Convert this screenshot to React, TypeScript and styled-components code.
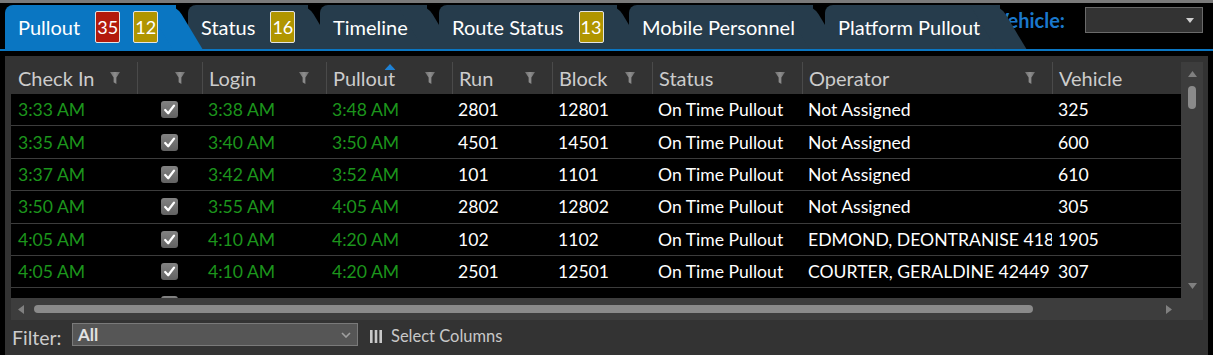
import React from "react";
import styled, { createGlobalStyle } from "styled-components";

const GlobalStyle = createGlobalStyle`
  html, body { margin: 0; padding: 0; background: #000; }
  body { font-family: Lato, "Open Sans", sans-serif; }
  * { box-sizing: border-box; }
`;

const Page = styled.div`
  width: 1213px;
  height: 355px;
  overflow: hidden;
  background: #000;
  border-top: 3px solid #7a7a7a;
  display: flex;
  flex-direction: column;
`;

const TabBar = styled.div`
  flex: none;
  display: flex;
  align-items: flex-end;
  gap: 12px;
  height: 48px;
  padding: 2px 0 0 5px;
  border-bottom: 2px solid #0a76c2;
`;

const Tab = styled.div<{ $active?: boolean; $w: number; $z: number }>`
  position: relative;
  z-index: ${(p) => (p.$active ? 20 : p.$z)};
  flex: none;
  width: ${(p) => p.$w}px;
  height: 44px;
  display: flex;
  align-items: center;
  padding-left: 13px;
  background: ${(p) => (p.$active ? "#0a76c2" : "#263c4c")};
  border-top-left-radius: 8px;
  color: #fff;
  font-size: 20px;
  white-space: nowrap;
  &::after {
    content: "";
    position: absolute;
    top: 0;
    bottom: 0;
    right: 0;
    width: 30px;
    background: inherit;
    border-top-right-radius: 9px;
    transform: skewX(31deg);
    transform-origin: top left;
    z-index: -1;
  }
`;

const Badge = styled.span<{ $tone: "red" | "gold"; $gap: number }>`
  display: inline-flex;
  align-items: center;
  justify-content: center;
  width: 25px;
  height: 32px;
  margin-left: ${(p) => p.$gap}px;
  border: 1px solid #e4e4e4;
  border-radius: 2px;
  background: ${(p) => (p.$tone === "red" ? "#b31a0c" : "#b09500")};
  color: #fff;
  font-size: 18px;
`;

const VehicleGroup = styled.div`
  flex: 1;
  align-self: flex-start;
  display: flex;
  align-items: center;
  justify-content: flex-end;
  gap: 20px;
  margin: 2px 0 0 -60px;
  padding-right: 10px;
  position: relative;
  z-index: 0;
`;

const VehicleLabel = styled.span`
  color: #1a78cc;
  font-weight: 700;
  font-size: 20px;
  white-space: nowrap;
`;

const VehicleSelect = styled.div`
  width: 118px;
  height: 26px;
  background: #333;
  border: 1px solid #6a6a6a;
  display: flex;
  align-items: center;
  justify-content: flex-end;
  padding-right: 8px;
`;

const Panel = styled.div`
  flex: 1;
  margin: 5px 5px 0 5px;
  background: #333;
  padding: 6px 5px 0 6px;
  display: flex;
  flex-direction: column;
`;

const Grid = styled.div`
  display: grid;
  grid-template-columns: 1170px 22px;
  grid-template-rows: 32px 204px 22px;
`;

const HeaderRow = styled.div`
  grid-column: 1;
  grid-row: 1;
  display: flex;
  background: #333;
`;

const HeadCell = styled.div<{ $w: number; $first?: boolean }>`
  position: relative;
  flex: none;
  width: ${(p) => p.$w}px;
  height: 100%;
  display: flex;
  align-items: center;
  justify-content: space-between;
  padding: 0 17px 0 ${(p) => (p.$first ? 7 : 6)}px;
  border-left: ${(p) => (p.$first ? "none" : "1px solid #4a4a4a")};
  color: #cccccc;
  font-size: 20px;
  white-space: nowrap;
`;

const SortMark = styled.svg`
  position: absolute;
  top: 2px;
  left: 50%;
  transform: translateX(-50%);
`;

const Body = styled.div`
  grid-column: 1;
  grid-row: 2;
  background: #000;
  overflow: hidden;
`;

const Row = styled.div`
  display: flex;
  height: 32.4px;
  border-bottom: 1px solid #3c3c3c;
`;

const Cell = styled.div<{ $w: number; $green?: boolean; $center?: boolean; $first?: boolean }>`
  flex: none;
  width: ${(p) => p.$w}px;
  display: flex;
  align-items: center;
  justify-content: ${(p) => (p.$center ? "center" : "flex-start")};
  padding-left: ${(p) => (p.$center ? 0 : p.$first ? 7 : 6)}px;
  overflow: hidden;
  white-space: nowrap;
  color: ${(p) => (p.$green ? "#1c951c" : "#fff")};
  font-size: 17.6px;
`;

const CheckBox = styled.span`
  width: 17px;
  height: 17px;
  border-radius: 3px;
  background: linear-gradient(#828282, #626262);
  display: flex;
  align-items: center;
  justify-content: center;
`;

const VScroll = styled.div`
  grid-column: 2;
  grid-row: 1 / 3;
  background: #3d3d3d;
  display: flex;
  flex-direction: column;
  align-items: center;
  padding: 9px 0 9px;
`;

const VThumb = styled.div`
  width: 8px;
  height: 23px;
  margin-top: 9px;
  border-radius: 4px;
  background: #8a8a8a;
`;

const Spacer = styled.div`
  flex: 1;
`;

const HScroll = styled.div`
  grid-column: 1 / 3;
  grid-row: 3;
  background: #3d3d3d;
  display: flex;
  align-items: center;
  padding: 0 31px 0 7px;
`;

const HThumb = styled.div`
  width: 999px;
  height: 8px;
  margin-left: 10px;
  border-radius: 4px;
  background: #8a8a8a;
`;

const FilterBar = styled.div`
  flex: 1;
  display: flex;
  align-items: center;
  padding-left: 1px;
`;

const FilterLabel = styled.span`
  width: 60px;
  color: #cccccc;
  font-size: 19.5px;
`;

const FilterSelect = styled.div`
  width: 286px;
  height: 23px;
  margin-bottom: 6px;
  background: #565656;
  border: 1px solid #7a7a7a;
  display: flex;
  align-items: center;
  justify-content: space-between;
  padding: 0 6px 0 5px;
  color: #e2e2e2;
  font-weight: 700;
  font-size: 17px;
`;

const ColumnsButton = styled.div`
  display: flex;
  align-items: center;
  gap: 9px;
  margin: 0 0 3px 12px;
  color: #c8c8c8;
  font-size: 16.5px;
`;

const Funnel = () => (
  <svg width="10" height="12" viewBox="0 0 10 12">
    <defs>
      <linearGradient id="fg" x1="0" x2="1">
        <stop offset="0" stopColor="#707070" />
        <stop offset="0.5" stopColor="#8e8e8e" />
        <stop offset="1" stopColor="#6c6c6c" />
      </linearGradient>
    </defs>
    <path d="M0 0 H10 L6.4 5.5 V12 L3.6 10.2 V5.5 Z" fill="url(#fg)" />
  </svg>
);

const Tri = ({ dir, color = "#808080" }: { dir: "up" | "down" | "left" | "right"; color?: string }) => {
  const paths: Record<string, string> = {
    up: "M0 6 L4.5 0 L9 6 Z",
    down: "M0 0 L9 0 L4.5 6 Z",
    left: "M6 0 L6 9 L0 4.5 Z",
    right: "M0 0 L0 9 L6 4.5 Z",
  };
  const horiz = dir === "left" || dir === "right";
  return (
    <svg width={horiz ? 6 : 9} height={horiz ? 9 : 6} viewBox={horiz ? "0 0 6 9" : "0 0 9 6"}>
      <path d={paths[dir]} fill={color} />
    </svg>
  );
};

const Check = () => (
  <svg width="13" height="13" viewBox="0 0 13 13">
    <path d="M2.2 7 L5.2 10.2 L11 2.6" fill="none" stroke="#fff" strokeWidth="2.3" strokeLinecap="round" strokeLinejoin="round" />
  </svg>
);

type Col = { title: string; w: number; filter: boolean; green?: boolean; check?: boolean; sort?: boolean };

const columns: Col[] = [
  { title: "Check In", w: 126, filter: true, green: true },
  { title: "", w: 65, filter: true, check: true },
  { title: "Login", w: 124, filter: true, green: true },
  { title: "Pullout", w: 126, filter: true, green: true, sort: true },
  { title: "Run", w: 100, filter: true },
  { title: "Block", w: 100, filter: true },
  { title: "Status", w: 150, filter: true },
  { title: "Operator", w: 250, filter: true },
  { title: "Vehicle", w: 129, filter: false },
];

const rows: string[][] = [
  ["3:33 AM", "", "3:38 AM", "3:48 AM", "2801", "12801", "On Time Pullout", "Not Assigned", "325"],
  ["3:35 AM", "", "3:40 AM", "3:50 AM", "4501", "14501", "On Time Pullout", "Not Assigned", "600"],
  ["3:37 AM", "", "3:42 AM", "3:52 AM", "101", "1101", "On Time Pullout", "Not Assigned", "610"],
  ["3:50 AM", "", "3:55 AM", "4:05 AM", "2802", "12802", "On Time Pullout", "Not Assigned", "305"],
  ["4:05 AM", "", "4:10 AM", "4:20 AM", "102", "1102", "On Time Pullout", "EDMOND, DEONTRANISE 41842", "1905"],
  ["4:05 AM", "", "4:10 AM", "4:20 AM", "2501", "12501", "On Time Pullout", "COURTER, GERALDINE 42449", "307"],
  ["", "", "", "", "", "", "", "", ""],
];

type TabDef = { label: string; w: number; badges?: { n: string; tone: "red" | "gold"; gap: number }[] };

const tabs: TabDef[] = [
  { label: "Pullout", w: 171, badges: [{ n: "35", tone: "red", gap: 15 }, { n: "12", tone: "gold", gap: 13 }] },
  { label: "Status", w: 120, badges: [{ n: "16", tone: "gold", gap: 15 }] },
  { label: "Timeline", w: 107 },
  { label: "Route Status", w: 178, badges: [{ n: "13", tone: "gold", gap: 15 }] },
  { label: "Mobile Personnel", w: 184 },
  { label: "Platform Pullout", w: 175 },
];

export default function App() {
  return (
    <>
      <GlobalStyle />
      <Page>
        <TabBar>
          {tabs.map((t, i) => (
            <Tab key={t.label} $w={t.w} $z={i + 1} $active={i === 0}>
              {t.label}
              {t.badges?.map((b) => (
                <Badge key={b.n} $tone={b.tone} $gap={b.gap}>
                  {b.n}
                </Badge>
              ))}
            </Tab>
          ))}
          <VehicleGroup>
            <VehicleLabel>Vehicle:</VehicleLabel>
            <VehicleSelect>
              <svg width="8" height="5" viewBox="0 0 8 5">
                <path d="M0 0 H8 L4 5 Z" fill="#cfcfcf" />
              </svg>
            </VehicleSelect>
          </VehicleGroup>
        </TabBar>
        <Panel>
          <Grid>
            <HeaderRow>
              {columns.map((c, i) => (
                <HeadCell key={i} $w={c.w} $first={i === 0}>
                  <span>{c.title}</span>
                  {c.filter && <Funnel />}
                  {c.sort && (
                    <SortMark width="11" height="6" viewBox="0 0 11 6">
                      <path d="M0 6 L5.5 0 L11 6 Z" fill="#1e82d6" />
                    </SortMark>
                  )}
                </HeadCell>
              ))}
            </HeaderRow>
            <VScroll>
              <Tri dir="up" />
              <VThumb />
              <Spacer />
              <Tri dir="down" />
            </VScroll>
            <Body>
              {rows.map((r, ri) => (
                <Row key={ri}>
                  {columns.map((c, ci) => (
                    <Cell key={ci} $w={c.w} $green={c.green} $center={c.check} $first={ci === 0}>
                      {c.check ? (
                        <CheckBox>
                          <Check />
                        </CheckBox>
                      ) : (
                        r[ci]
                      )}
                    </Cell>
                  ))}
                </Row>
              ))}
            </Body>
            <HScroll>
              <Tri dir="left" />
              <HThumb />
              <Spacer />
              <Tri dir="right" />
            </HScroll>
          </Grid>
          <FilterBar>
            <FilterLabel>Filter:</FilterLabel>
            <FilterSelect>
              <span>All</span>
              <svg width="10" height="6" viewBox="0 0 10 6">
                <path d="M1 1 L5 5 L9 1" fill="none" stroke="#a0a0a0" strokeWidth="1.6" />
              </svg>
            </FilterSelect>
            <ColumnsButton>
              <svg width="12" height="13" viewBox="0 0 12 13">
                <rect x="0" y="0" width="2.6" height="13" fill="#c8c8c8" />
                <rect x="4.7" y="0" width="2.6" height="13" fill="#c8c8c8" />
                <rect x="9.4" y="0" width="2.6" height="13" fill="#c8c8c8" />
              </svg>
              <span>Select Columns</span>
            </ColumnsButton>
          </FilterBar>
        </Panel>
      </Page>
    </>
  );
}
